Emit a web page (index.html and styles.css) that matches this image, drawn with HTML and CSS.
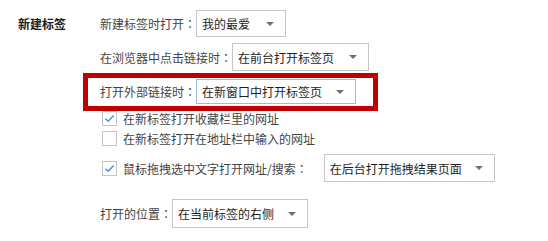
FILE: index.html
```html
<!DOCTYPE html>
<html lang="zh-CN">
<head>
<meta charset="utf-8">
<title>新建标签</title>
<link rel="stylesheet" href="styles.css">
</head>
<body>
<div class="section">
  <div class="section-title">新建标签</div>
  <div class="section-body">
    <div class="row row-1">
      <span class="label">新建标签时打开<span class="colon" lang="zh-TW">：</span></span>
      <div class="select w-90"><span class="value">我的最爱</span><span class="arrow"></span></div>
    </div>
    <div class="row row-2">
      <span class="label">在浏览器中点击链接时<span class="colon" lang="zh-TW">：</span></span>
      <div class="select w-137 h-28"><span class="value">在前台打开标签页</span><span class="arrow"></span></div>
    </div>
    <div class="row row-3 highlighted">
      <span class="label">打开外部链接时<span class="colon" lang="zh-TW">：</span></span>
      <div class="select w-160 h-25 focused"><span class="value">在新窗口中打开标签页</span><span class="arrow"></span></div>
    </div>
    <div class="check-row cr-1">
      <span class="checkbox checked"><svg viewBox="0 0 15 15" width="15" height="15"><path d="M3.5 7.8 L6.2 10.3 L11.6 4.6" fill="none" stroke="#4a8fe0" stroke-width="1.5"/></svg></span>
      <span class="check-label">在新标签打开收藏栏里的网址</span>
    </div>
    <div class="check-row">
      <span class="checkbox"></span>
      <span class="check-label">在新标签打开在地址栏中输入的网址</span>
    </div>
    <div class="check-row cr-3">
      <span class="checkbox checked"><svg viewBox="0 0 15 15" width="15" height="15"><path d="M3.5 7.8 L6.2 10.3 L11.6 4.6" fill="none" stroke="#4a8fe0" stroke-width="1.5"/></svg></span>
      <span class="check-label">鼠标拖拽选中文字打开网址/搜索<span class="colon" lang="zh-TW">：</span></span>
      <div class="select w-171 h-28 ml-16"><span class="value">在后台打开拖拽结果页面</span><span class="arrow"></span></div>
    </div>
    <div class="row row-last">
      <span class="label">打开的位置<span class="colon" lang="zh-TW">：</span></span>
      <div class="select w-136 h-29"><span class="value">在当前标签的右侧</span><span class="arrow"></span></div>
    </div>
  </div>
</div>
</body>
</html>
```
FILE: styles.css
```css
html, body {
  margin: 0;
  padding: 0;
  background: #ffffff;
}
body {
  font-family: "Noto Sans CJK SC", "Microsoft YaHei", sans-serif;
  font-size: 12px;
  color: #444;
  width: 548px;
  height: 241px;
  overflow: hidden;
}
.section {
  display: flex;
  padding-top: 10px;
}
.section-title {
  width: 82px;
  padding-left: 18px;
  line-height: 27px;
  height: 27px;
  color: #1a1a1a;
  font-weight: bold;
}
.section-body {
  display: flex;
  flex-direction: column;
  align-items: flex-start;
}
.row {
  display: flex;
  align-items: center;
}
.row-2 { margin-top: 6px; }
.row-3 { margin-top: 8px; }
.row-last { margin-top: 17px; }
.label {
  color: #444;
  white-space: nowrap;
}
.colon {
  font-family: "Noto Sans CJK TC", "Noto Sans CJK SC", sans-serif;
}
.select {
  box-sizing: border-box;
  height: 27px;
  border: 1px solid #c6c6c6;
  background: #fff;
  display: flex;
  align-items: center;
  justify-content: space-between;
  padding: 0 11px 0 5px;
  color: #1e1e1e;
  white-space: nowrap;
}
.select.h-25 { height: 25px; }
.select.h-28 { height: 28px; }
.select.h-29 { height: 29px; }
.select.focused {
  border-color: #9bbbe0;
}
.w-90 { width: 90px; }
.w-136 { width: 136px; }
.w-137 { width: 137px; }
.w-160 { width: 160px; }
.w-171 { width: 171px; }
.ml-16 { margin-left: 16px; }
.arrow {
  width: 0;
  height: 0;
  border-left: 4px solid transparent;
  border-right: 4px solid transparent;
  border-top: 4px solid #707070;
}
.highlighted {
  position: relative;
}
.highlighted::after {
  content: "";
  position: absolute;
  left: -17px;
  right: -22px;
  top: -6px;
  bottom: -7px;
  border: 5px solid #c00000;
  pointer-events: none;
}
.check-row {
  display: flex;
  align-items: center;
  height: 20px;
  padding-left: 2px;
}
.cr-1 { margin-top: 4px; }
.cr-3 {
  margin-top: 6px;
  height: 28px;
}
.checkbox {
  box-sizing: border-box;
  width: 15px;
  height: 15px;
  border: 1px solid #c4c4c4;
  background: #fff;
  display: flex;
  align-items: center;
  justify-content: center;
  margin-right: 6px;
  position: relative;
}
.checkbox svg {
  position: absolute;
  left: -1px;
  top: -1px;
}
.check-label {
  color: #444;
  white-space: nowrap;
}
```
